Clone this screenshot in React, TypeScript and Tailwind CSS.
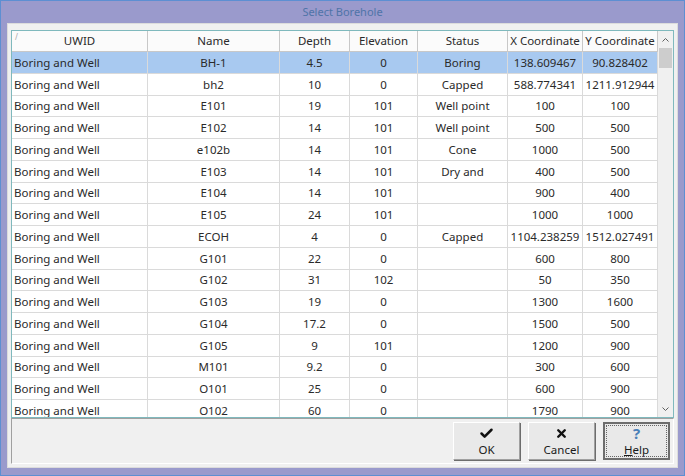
import { Check, X } from "lucide-react";

const rows: [string, string, string, string, string, string, string][] = [
  ["Boring and Well", "BH-1", "4.5", "0", "Boring", "138.609467", "90.828402"],
  ["Boring and Well", "bh2", "10", "0", "Capped", "588.774341", "1211.912944"],
  ["Boring and Well", "E101", "19", "101", "Well point", "100", "100"],
  ["Boring and Well", "E102", "14", "101", "Well point", "500", "500"],
  ["Boring and Well", "e102b", "14", "101", "Cone", "1000", "500"],
  ["Boring and Well", "E103", "14", "101", "Dry and", "400", "500"],
  ["Boring and Well", "E104", "14", "101", "", "900", "400"],
  ["Boring and Well", "E105", "24", "101", "", "1000", "1000"],
  ["Boring and Well", "ECOH", "4", "0", "Capped", "1104.238259", "1512.027491"],
  ["Boring and Well", "G101", "22", "0", "", "600", "800"],
  ["Boring and Well", "G102", "31", "102", "", "50", "350"],
  ["Boring and Well", "G103", "19", "0", "", "1300", "1600"],
  ["Boring and Well", "G104", "17.2", "0", "", "1500", "500"],
  ["Boring and Well", "G105", "9", "101", "", "1200", "900"],
  ["Boring and Well", "M101", "9.2", "0", "", "300", "600"],
  ["Boring and Well", "O101", "25", "0", "", "600", "900"],
  ["Boring and Well", "O102", "60", "0", "", "1790", "900"],
];

const cols = [
  { name: "UWID", w: "w-[136px]" },
  { name: "Name", w: "w-[132px]" },
  { name: "Depth", w: "w-[70px]" },
  { name: "Elevation", w: "w-[68px]" },
  { name: "Status", w: "w-[90px]" },
  { name: "X Coordinate", w: "w-[75px]" },
  { name: "Y Coordinate", w: "w-[75px]" },
];

function Btn({ icon, label, isDefault }: { icon: React.ReactNode; label: React.ReactNode; isDefault?: boolean }) {
  return (
    <div
      className={
        "w-[67px] h-[38px] flex flex-col items-center justify-center bg-[#e9e9e9] " +
        (isDefault
          ? "border-2 border-[#6d6d6d] outline-1 outline-dotted outline-[#666] -outline-offset-[4px]"
          : "border border-t-white border-l-white border-r-[#a0a0a0] border-b-[#a0a0a0] shadow-[1px_1px_0_#6d6d6d]")
      }
    >
      <div className="h-[17px] flex items-center">{icon}</div>
      <div className="text-[11.5px] leading-[15px] text-[#1a1a1a]">{label}</div>
    </div>
  );
}

export default function App() {
  return (
    <div
      className="w-[685px] h-[476px] bg-[#9a9acc] border border-[#5d8fd2] flex flex-col overflow-hidden"
      style={{ fontFamily: '"Noto Sans", "Open Sans", sans-serif' }}
    >
      <div className="h-[22px] flex items-center justify-center text-[11px] text-[#4f74a8]">Select Borehole</div>
      <div className="mx-[6px] mb-[7px] flex-1 bg-[#f0f0f0] border border-[#dcdcdc] flex flex-col px-[3px] pt-[6px]">
        <div className="h-[388px] border border-[#7fb9bd] bg-white flex overflow-hidden">
          <div className="flex-1 flex flex-col overflow-hidden">
            <div className="flex h-[21px] shrink-0 border-b border-[#c8c8c8] bg-[#fbfbfb]">
              {cols.map((c, i) => (
                <div
                  key={c.name}
                  className={`${c.w} shrink-0 relative flex items-center justify-center text-[11.5px] text-[#2a2a2a] border-r border-[#c8c8c8]`}
                >
                  {i === 0 && <span className="absolute left-[3px] top-[0px] text-[8px] text-[#aaa]">/</span>}
                  {c.name}
                </div>
              ))}
            </div>
            {rows.map((r, ri) => (
              <div
                key={ri}
                className={`flex h-[21.75px] shrink-0 border-b border-[#dadada] ${ri === 0 ? "bg-[#a8c9f0]" : "bg-white"}`}
              >
                {r.map((v, ci) => (
                  <div
                    key={ci}
                    className={`${cols[ci].w} shrink-0 flex items-center text-[11.5px] text-[#2a2a2a] border-r border-[#dadada] whitespace-nowrap overflow-hidden ${
                      ci === 0 ? "justify-start pl-[2px]" : "justify-center"
                    }`}
                  >
                    {v}
                  </div>
                ))}
              </div>
            ))}
          </div>
          <div className="w-[15px] shrink-0 bg-[#f0f0f0] flex flex-col">
            <div className="h-[17px] flex items-center justify-center">
              <svg width="7" height="4" viewBox="0 0 7 4">
                <path d="M0.5 3.5 L3.5 0.5 L6.5 3.5" fill="none" stroke="#606060" strokeWidth="1" />
              </svg>
            </div>
            <div className="mx-[1px] h-[20px] bg-[#cdcdcd]" />
            <div className="flex-1" />
            <div className="h-[17px] flex items-center justify-center">
              <svg width="7" height="4" viewBox="0 0 7 4">
                <path d="M0.5 0.5 L3.5 3.5 L6.5 0.5" fill="none" stroke="#606060" strokeWidth="1" />
              </svg>
            </div>
          </div>
        </div>
        <div className="h-[46px] border border-t-[#a0a0a0] border-l-[#a0a0a0] border-r-white border-b-white flex items-center justify-end gap-[8px] pr-[3px]">
          <Btn icon={<Check size={15} strokeWidth={4} className="text-[#111]" />} label="OK" />
          <Btn icon={<X size={13} strokeWidth={4.5} className="text-[#111]" />} label="Cancel" />
          <Btn
            isDefault
            icon={<span className="text-[15px] font-bold leading-none text-[#4a7fb8]">?</span>}
            label={
              <>
                <span className="underline">H</span>elp
              </>
            }
          />
        </div>
      </div>
    </div>
  );
}
